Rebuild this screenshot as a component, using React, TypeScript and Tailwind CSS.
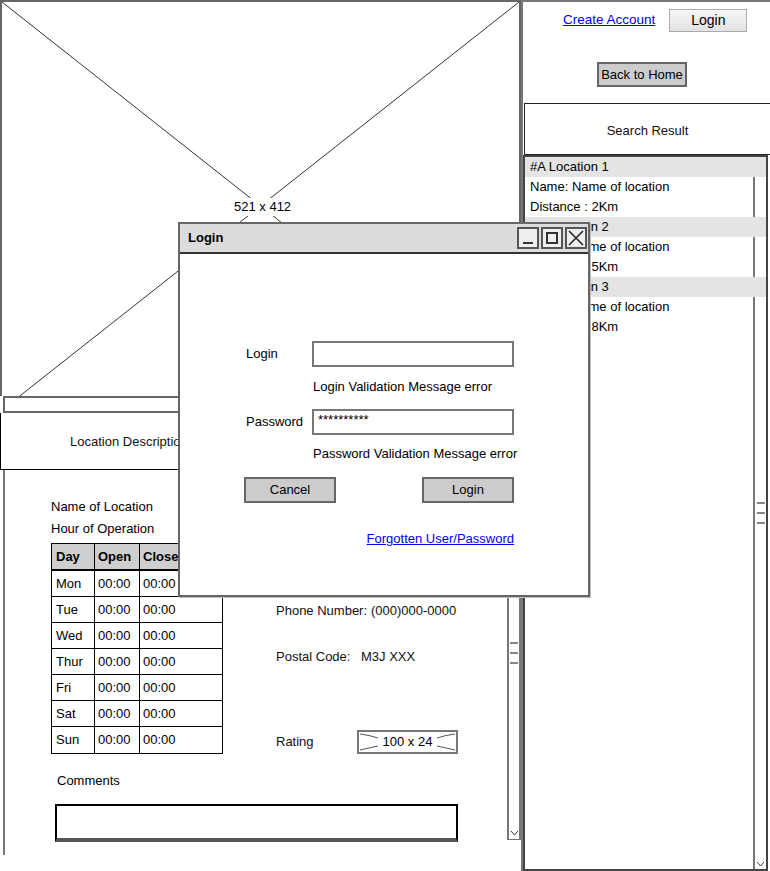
import React from "react";

const font = "font-['Liberation_Sans',Arial,sans-serif]";

const hours = ["Mon", "Tue", "Wed", "Thur", "Fri", "Sat", "Sun"];

const results = [
  { id: "#A Location 1", dist: "2Km" },
  { id: "#A Location 2", dist: "5Km" },
  { id: "#A Location 3", dist: "8Km" },
];

function Chevron() {
  return (
    <svg width="9" height="6" viewBox="0 0 9 6" className="block">
      <path d="M1 1 L4.5 5 L8 1" fill="none" stroke="#333" strokeWidth="1" />
    </svg>
  );
}

function Grip() {
  return (
    <div className="flex flex-col gap-[8px]">
      <div className="h-[2px] w-[8px] bg-[#888]" />
      <div className="h-[2px] w-[8px] bg-[#888]" />
      <div className="h-[2px] w-[8px] bg-[#888]" />
    </div>
  );
}

function ImagePlaceholder() {
  return (
    <div className="relative h-[396px] overflow-hidden border-x-2 border-t-2 border-[#666] bg-white">
      <svg width="521" height="412" viewBox="0 0 521 412" className="absolute left-[-2px] top-[-2px]">
        <line x1="2" y1="2" x2="519" y2="410" stroke="#333" strokeWidth="1" />
        <line x1="519" y1="2" x2="2" y2="410" stroke="#333" strokeWidth="1" />
      </svg>
      <span className="absolute left-[229px] top-[196px] bg-white px-[3px] text-[13px] leading-[18px] text-black">
        521 x 412
      </span>
    </div>
  );
}

function HoursTable() {
  return (
    <div className="mt-[3px] w-[172px] border border-black text-[13px] text-black">
      <div className="flex h-[27px] border-b-2 border-black bg-[#cfcfcf] font-bold">
        <div className="flex w-[43px] items-center border-r border-black pl-[4px]">Day</div>
        <div className="flex w-[45px] items-center border-r border-black pl-[3px]">Open</div>
        <div className="flex flex-1 items-center pl-[3px]">Close</div>
      </div>
      {hours.map((d, i) => (
        <div key={d} className={`flex h-[26px] ${i < hours.length - 1 ? "border-b border-black" : ""}`}>
          <div className="flex w-[43px] items-center border-r border-black pl-[4px]">{d}</div>
          <div className="flex w-[45px] items-center border-r border-black pl-[3px]">00:00</div>
          <div className="flex flex-1 items-center pl-[3px]">00:00</div>
        </div>
      ))}
    </div>
  );
}

function RatingBox() {
  return (
    <div className="relative flex h-[24px] w-[101px] items-center justify-center border-2 border-[#777] bg-white">
      <svg width="97" height="20" viewBox="0 0 97 20" className="absolute left-0 top-0">
        <path d="M1 2 Q10 3 19 6" fill="none" stroke="#555" strokeWidth="1" />
        <path d="M1 18 Q10 16 19 14" fill="none" stroke="#555" strokeWidth="1" />
        <path d="M96 2 Q87 3 78 6" fill="none" stroke="#555" strokeWidth="1" />
        <path d="M96 18 Q87 16 78 14" fill="none" stroke="#555" strokeWidth="1" />
      </svg>
      <span className="relative text-[13px] text-black">100 x 24</span>
    </div>
  );
}

function LocationPanel() {
  return (
    <div className="ml-[3px] flex h-[385px] border-l-2 border-[#777] bg-white">
      <div className="flex-1 pl-[46px] pt-[26px] text-[13px] leading-[22px] text-black">
        <div className="flex">
          <div className="w-[225px]">
            <div>Name of Location</div>
            <div>Hour of Operation</div>
            <HoursTable />
          </div>
          <div className="pt-[104px] text-[#111]">
            <div className="flex">
              <span className="w-[95px]">Phone Number:</span>
              <span>(000)000-0000</span>
            </div>
            <div className="mt-[24px] flex">
              <span className="w-[85px]">Postal Code:</span>
              <span>M3J XXX</span>
            </div>
            <div className="mt-[62px] flex items-center">
              <span className="w-[81px]">Rating</span>
              <RatingBox />
            </div>
          </div>
        </div>
        <div className="ml-[6px] mt-[16px]">Comments</div>
        <div className="ml-[4px] mt-[12px] h-[38px] w-[403px] border-2 border-black border-b-[4px] border-b-[#555] bg-white" />
      </div>
      <div className="flex h-[370px] w-[14px] flex-col items-center justify-between border-x-2 border-b border-[#777] pb-[3px]">
        <div className="mt-[172px]">
          <Grip />
        </div>
        <Chevron />
      </div>
    </div>
  );
}

function WindowButton({ children }: { children: React.ReactNode }) {
  return (
    <div className="flex h-[22px] w-[22px] items-center justify-center border-2 border-[#555] bg-[#eee]">
      {children}
    </div>
  );
}

function LoginDialog() {
  return (
    <div className="absolute left-[178px] top-[222px] h-[375px] w-[412px] border-2 border-[#666] bg-white text-[13px] text-black shadow-[1px_1px_0_#bbb]">
      <div className="flex h-[30px] items-center justify-between border-b-2 border-[#333] bg-[#dcdcdc] pl-[8px] pr-[1px]">
        <span className="font-bold">Login</span>
        <div className="flex gap-[2px]">
          <WindowButton>
            <div className="mt-[10px] h-[2px] w-[10px] bg-[#333]" />
          </WindowButton>
          <WindowButton>
            <div className="h-[12px] w-[12px] border-2 border-[#333]" />
          </WindowButton>
          <WindowButton>
            <svg width="16" height="16" viewBox="0 0 16 16">
              <path d="M1 1 L15 15 M15 1 L1 15" stroke="#222" strokeWidth="1.5" />
            </svg>
          </WindowButton>
        </div>
      </div>
      <div className="flex flex-col">
        <div className="ml-[66px] mt-[87px] flex h-[26px] items-center">
          <span className="w-[66px]">Login</span>
          <div className="h-[26px] w-[202px] border-2 border-[#777] bg-white" />
        </div>
        <div className="ml-[133px] mt-[10px] leading-[20px]">Login Validation Message error</div>
        <div className="ml-[66px] mt-[12px] flex h-[26px] items-center">
          <span className="w-[66px]">Password</span>
          <div className="flex h-[26px] w-[202px] items-start border-2 border-[#777] bg-white pl-[4px] pt-[2px] leading-[14px]">
            **********
          </div>
        </div>
        <div className="ml-[133px] mt-[9px] leading-[20px]">Password Validation Message error</div>
        <div className="ml-[64px] mt-[13px] flex w-[270px] justify-between">
          <div className="flex h-[26px] w-[92px] items-center justify-center border-2 border-[#666] bg-[#cccccc]">Cancel</div>
          <div className="flex h-[26px] w-[92px] items-center justify-center border-2 border-[#666] bg-[#cccccc]">Login</div>
        </div>
        <div className="ml-[64px] mt-[26px] w-[270px] text-right leading-[20px]">
          <a href="#" className="text-[#0000ee] underline">Forgotten User/Password</a>
        </div>
      </div>
    </div>
  );
}

function ResultsList() {
  return (
    <div className="relative h-[716px] w-[245px] border-2 border-[#444] bg-white text-[13px] leading-[20px] text-black">
      <div className="absolute bottom-0 right-0 top-0 flex w-[13px] flex-col items-center justify-between border-l-2 border-[#777] pb-[2px]">
        <div className="mt-[345px]">
          <Grip />
        </div>
        <Chevron />
      </div>
      <div className="relative">
        {results.map((r) => (
          <div key={r.id}>
            <div className="bg-[#e4e4e4] pl-[5px]">{r.id}</div>
            <div className="pl-[5px]">Name: Name of location</div>
            <div className="pl-[5px]">Distance : {r.dist}</div>
          </div>
        ))}
      </div>
    </div>
  );
}

function Sidebar() {
  return (
    <div className="h-[871px] w-[249px] border-l-2 border-t-2 border-[#777] bg-white">
      <div className="ml-[40px] mt-[7px] flex items-center">
        <a href="#" className="text-[13.5px] text-[#0000ee] underline">
          Create Account
        </a>
        <button className="ml-[14px] h-[23px] w-[78px] border border-[#aaa] bg-gradient-to-b from-[#f6f6f6] to-[#e2e2e2] text-[14px] text-black">
          Login
        </button>
      </div>
      <div className="ml-[74px] mt-[30px] flex h-[25px] w-[90px] items-center justify-center border-2 border-[#666] bg-[#cccccc] pt-[1px] text-[13px] text-black">
        Back to Home
      </div>
      <div className="ml-[1px] mt-[16px] flex h-[52px] items-center justify-center border border-r-0 border-[#222] pt-[4px] text-[13px] text-[#111]">
        Search Result
      </div>
      <ResultsList />
    </div>
  );
}

export default function App() {
  return (
    <div className={`relative flex h-[871px] w-[770px] overflow-hidden bg-white ${font}`}>
      <div className="w-[521px]">
        <ImagePlaceholder />
        <div className="ml-[3px] h-[17px] border-y-2 border-l-2 border-[#666] bg-white" />
        <div className="flex h-[57px] items-center border border-t-0 border-black pl-[69px] pt-[2px] text-[13px] text-[#111]">
          Location Description
        </div>
        <LocationPanel />
      </div>
      <Sidebar />
      <LoginDialog />
    </div>
  );
}
